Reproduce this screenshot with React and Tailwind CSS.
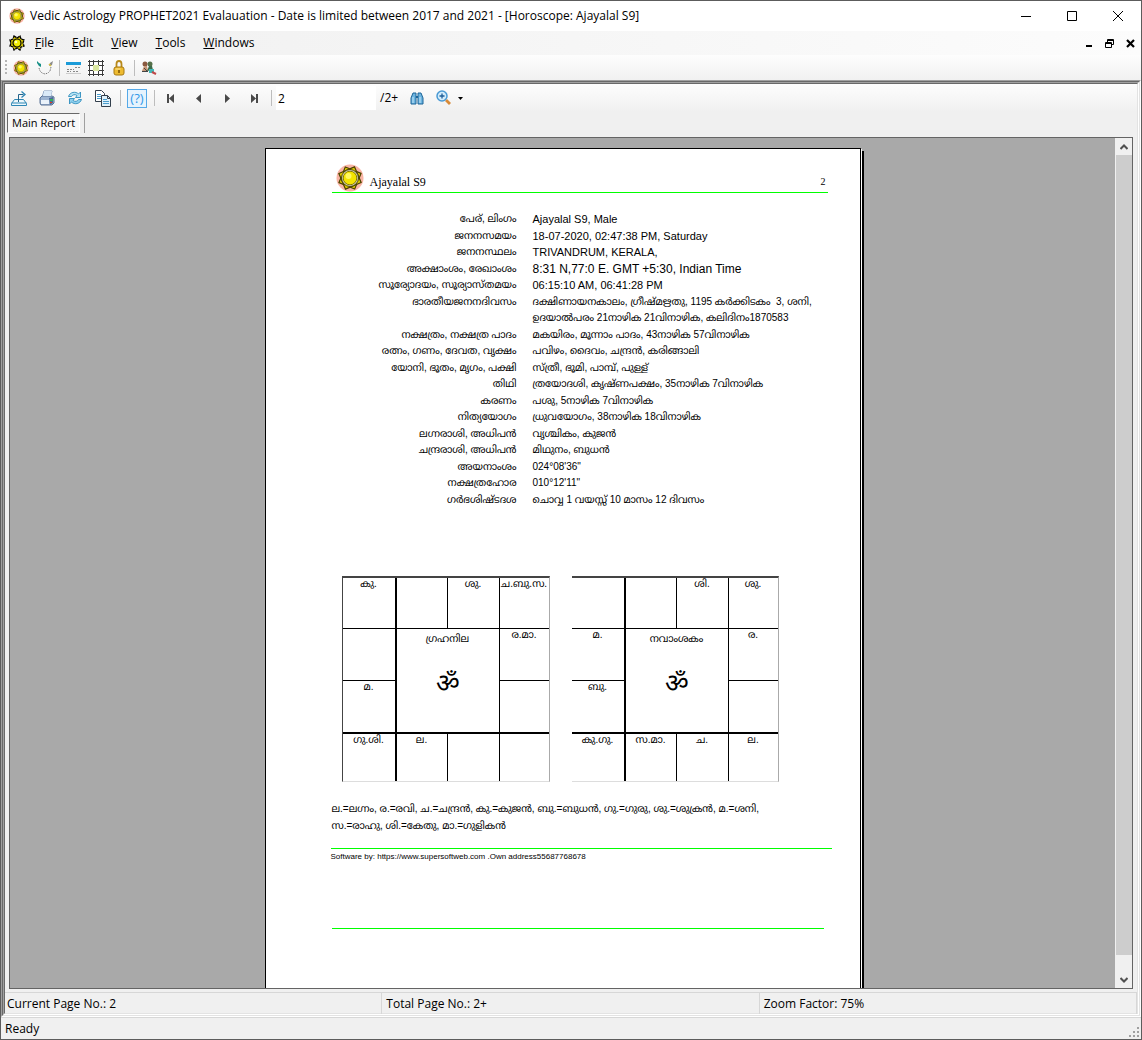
import { useState } from "react";

const menus = ["File", "Edit", "View", "Tools", "Windows"];

const details = [
    { label: "പേര്, ലിംഗം", value: "Ajayalal S9, Male", size: "latin" },
    { label: "ജനനസമയം", value: "18-07-2020, 02:47:38 PM, Saturday", size: "latin" },
    { label: "ജനനസ്ഥലം", value: "TRIVANDRUM, KERALA,", size: "latin" },
    { label: "അക്ഷാംശം, രേഖാംശം", value: "8:31 N,77:0 E. GMT +5:30, Indian Time", size: "large" },
    { label: "സൂര്യോദയം, സൂര്യാസ്തമയം", value: "06:15:10 AM, 06:41:28 PM", size: "latin" },
    { label: "ഭാരതീയജനനദിവസം", value: "ദക്ഷിണായനകാലം, ഗ്രീഷ്മഋതു, 1195 കർക്കിടകം  3, ശനി," },
    { label: "", value: "ഉദയാൽപരം 21നാഴിക 21വിനാഴിക, കലിദിനം1870583" },
    { label: "നക്ഷത്രം, നക്ഷത്ര പാദം", value: "മകയിരം, മൂന്നാം പാദം, 43നാഴിക 57വിനാഴിക" },
    { label: "രത്നം, ഗണം, ദേവത, വൃക്ഷം", value: "പവിഴം, ദൈവം, ചന്ദ്രൻ, കരിങ്ങാലി" },
    { label: "യോനി, ഭൂതം, മൃഗം, പക്ഷി", value: "സ്ത്രീ, ഭൂമി, പാമ്പ്, പുള്ള്" },
    { label: "തിഥി", value: "ത്രയോദശി, കൃഷ്ണപക്ഷം, 35നാഴിക 7വിനാഴിക" },
    { label: "കരണം", value: "പശു, 5നാഴിക 7വിനാഴിക" },
    { label: "നിത്യയോഗം", value: "ധ്രുവയോഗം, 38നാഴിക 18വിനാഴിക" },
    { label: "ലഗ്നരാശി, അധിപൻ", value: "വൃശ്ചികം, കുജൻ" },
    { label: "ചന്ദ്രരാശി, അധിപൻ", value: "മിഥുനം, ബുധൻ" },
    { label: "അയനാംശം", value: "024°08'36\"" },
    { label: "നക്ഷത്രഹോര", value: "010°12'11\"" },
    { label: "ഗർഭശിഷ്ടദശ", value: "ചൊവ്വ 1 വയസ്സ് 10 മാസം 12 ദിവസം" },
];

const valueSize = {
    latin: "text-[11px]",
    large: "text-[12px]",
    small: "text-[10px]",
};

// houses run row by row, null is where the centre square sits
const grahanila = {
    title: "ഗ്രഹനില",
    houses: ["കു.", "", "ശു.", "ച.ബു.സ.", "", null, "ര.മാ.", "മ.", "", "ഗു.ശി.", "ല.", "", ""],
};
const navamsakam = {
    title: "നവാംശകം",
    houses: ["", "", "ശി.", "ശു.", "മ.", null, "ര.", "ബു.", "", "കു.ഗു.", "സ.മാ.", "ച.", "ല."],
};

function Sun({ className }) {
    return (
        <svg viewBox="0 0 28 28" className={className}>
            <circle cx="14" cy="14" r="13.5" fill="#f9b4a4" />
            <g fill="#e8d400" stroke="#4a4200" strokeWidth="1.2">
                <rect x="5.5" y="5.5" width="17" height="17" transform="rotate(22 14 14)" />
                <rect x="5.5" y="5.5" width="17" height="17" transform="rotate(67 14 14)" />
            </g>
            <circle cx="14" cy="14" r="8.5" fill="#d8d8c0" stroke="#4a4200" />
            <circle cx="14" cy="14" r="6.8" fill="#f4e400" stroke="#8a7c00" />
            <circle cx="12.5" cy="12" r="3" fill="#fff860" />
        </svg>
    );
}

function MenuSun() {
    return (
        <svg viewBox="0 0 16 16" className="size-4">
            <path d="M5 1l3 2 3-2 1 3 3 1-1 3 1 3-3 1-1 3-3-2-3 2-1-3-3-1 1-3-1-3 3-1z" fill="#d8c800" stroke="#000" strokeWidth="1.3" strokeDasharray="3 .6" />
            <circle cx="8" cy="8" r="4" fill="#f0ec00" stroke="#000" strokeWidth="1.2" />
            <circle cx="7" cy="7" r="1.3" fill="#ffffb0" />
        </svg>
    );
}

function Separator() {
    return <div className="w-px h-4 bg-[#bdbdbd]" />;
}

function MainToolbar() {
    return (
        <div className="flex items-center h-[25px] shrink-0 pl-1 bg-linear-to-b from-[#fdfdfd] to-[#f1f1f1]">
            <svg viewBox="0 0 2 16" className="w-0.5 h-4">
                <path d="M0 1h2M0 5h2M0 9h2M0 13h2" stroke="#b5b5b5" strokeWidth="2" />
            </svg>
            <button aria-label="Horoscope" className="ml-1.5"><Sun className="size-4" /></button>
            <button aria-label="Matching" className="ml-2">
                <svg viewBox="0 0 16 16" className="size-4">
                    <path d="M0 1l2 2 2 1v3l-2-1-2-3z" fill="#168f86" />
                    <path d="M16 1l-3 2-1 3 3-1z" fill="#8a8a8a" />
                    <path d="M12 4l2 2" stroke="#d8c040" strokeWidth="1.5" />
                    <path d="M2 8l1 3 2 2 3 1 3-1M14 7l-1 4-2 2" fill="none" stroke="#777" strokeDasharray="1.5 1" />
                </svg>
            </button>
            <div className="ml-1.5"><Separator /></div>
            <button aria-label="Report list" className="ml-1.5">
                <svg viewBox="0 0 16 16" className="size-4">
                    <rect y="2" width="15" height="3" fill="#1b9bd8" />
                    <rect y="5" width="15" height="9" fill="#f4f4f4" />
                    <path d="M9 7.500h5M1 9.500h7M1 11.500h4M7 11.500h6" stroke="#888" strokeDasharray="2 1" />
                    <path d="M0 13.500h15" stroke="#ccc" />
                </svg>
            </button>
            <button aria-label="Chart" className="ml-1.5">
                <svg viewBox="0 0 16 16" className="size-4">
                    <rect width="16" height="16" fill="#fff" />
                    <path d="M0 1.500h16M0 5.500h16M0 10.500h16M0 14.500h16M1.500 0v16M5.500 0v16M10.500 0v16M14.500 0v16" stroke="#3c3c3c" />
                    <rect x="5" y="5" width="6" height="6" fill="#dbe8a0" />
                </svg>
            </button>
            <button aria-label="Lock" className="ml-2">
                <svg viewBox="0 0 14 16" className="w-3.5 h-4">
                    <path d="M4.500 8V4a2.500 3 0 0 1 5 0v4" fill="none" stroke="#b88a1c" strokeWidth="1.8" />
                    <rect x="2" y="7" width="10" height="8" rx="2" fill="#eebb30" stroke="#a67810" />
                    <path d="M3.500 9h5" stroke="#ffe9a0" />
                    <path d="M7 10v3" stroke="#7a5200" strokeWidth="1.500" />
                </svg>
            </button>
            <div className="ml-2"><Separator /></div>
            <button aria-label="People" className="ml-1.5">
                <svg viewBox="0 0 16 16" className="size-4">
                    <circle cx="4" cy="4" r="2.500" fill="#8a5a40" />
                    <circle cx="9" cy="4" r="2.500" fill="#55704a" />
                    <path d="M1 11l2-5h3l1 5z" fill="#c89878" />
                    <path d="M6 11l2-5h3l1 4z" fill="#3d6b4a" />
                    <path d="M1 11.500h6M3 8l3 3" stroke="#444" />
                    <rect x="8" y="9" width="5" height="4" fill="#42b8b8" />
                    <path d="M11 12l4 2" stroke="#c04848" strokeWidth="2" />
                </svg>
            </button>
        </div>
    );
}

function ViewerToolbar() {
    const [page, setPage] = useState("2");

    return (
        <div className="flex items-center h-7 shrink-0 pl-1.5 text-[#4a4a4a]">
            <button aria-label="Export">
                <svg viewBox="0 0 16 16" className="size-4">
                    <path d="M3.500 9.500l-3 4v2h15v-2l-3-4zM.5 13h15" fill="#eef8fc" stroke="#2d86b5" />
                    <path d="M7.500 12V4.500h5" fill="none" stroke="#24648a" />
                    <path d="M10.500 1.500l3.500 3-3.500 3" fill="none" stroke="#2d86b5" strokeWidth="1.300" />
                </svg>
            </button>
            <button aria-label="Print" className="ml-3">
                <svg viewBox="0 0 16 16" className="size-4">
                    <path d="M5 1h8l-2 7H3z" fill="#dbeaf8" stroke="#7b95b8" />
                    <path d="M1 8l2-2h10l2 1v6l-2 2H2l-1-2z" fill="#9db4d2" stroke="#5a7396" />
                    <path d="M5 1h8l-1 5H4z" fill="#dbeaf8" />
                    <path d="M2 10h8v4H2z" fill="#eaf2fa" />
                    <path d="M10 8l4-1v6l-3 2z" fill="#4a6a98" />
                    <rect x="11" y="9" width="3" height="2" fill="#38b058" />
                    <rect x="11" y="12" width="2" height="1" fill="#e04020" />
                </svg>
            </button>
            <button aria-label="Refresh" className="ml-3">
                <svg viewBox="0 0 16 16" className="size-4">
                    <path d="M1.500 6.500C3 2 8.500 1 11.500 4L13.500 2v5.500H8.500l1.500-2C8 4 5.500 4.500 4.500 6.500z" fill="#b9e4f5" stroke="#2f8dbd" strokeWidth=".9" />
                    <path d="M14.500 9.500c-1.500 4.500-7 5.500-10 2.500l-2 2V8.500h5l-1.500 2c2 1.500 4.500 1 5.500-1z" fill="#8fd0ee" stroke="#2f8dbd" strokeWidth=".9" />
                </svg>
            </button>
            <button aria-label="Copy" className="ml-3">
                <svg viewBox="0 0 17 17" className="size-[17px]">
                    <path d="M.5.5h6l3 3v8h-9z" fill="#fff" stroke="#333f4c" />
                    <path d="M2 4.500h4M2 6.500h5M2 8.500h5" stroke="#4a9ccc" />
                    <path d="M6.500 5.500h6l3 3v8h-9z" fill="#dff1fb" stroke="#333f4c" />
                    <path d="M12.500 5.500v3h3" fill="none" stroke="#333f4c" />
                    <path d="M8 9.500h4M8 11.500h6M8 13.500h6" stroke="#4a9ccc" />
                </svg>
            </button>
            <div className="ml-2"><Separator /></div>
            <button className="ml-1.5 w-5 h-[19px] border border-[#55a9e8] bg-[#e6f3fd] text-[13px] leading-4 font-medium text-[#3298e8]">(?)</button>
            <div className="ml-[7px]"><Separator /></div>
            <button aria-label="First page" className="ml-3">
                <svg viewBox="0 0 8 9" className="w-2 h-[9px]" fill="currentColor"><path d="M0 0h2v9H0zM7 0v9L2 4.500z" /></svg>
            </button>
            <button aria-label="Previous page" className="ml-5">
                <svg viewBox="0 0 8 9" className="w-2 h-[9px]" fill="currentColor"><path d="M6 0v9L1 4.500z" /></svg>
            </button>
            <button aria-label="Next page" className="ml-5">
                <svg viewBox="0 0 8 9" className="w-2 h-[9px]" fill="currentColor"><path d="M2 0v9l5-4.500z" /></svg>
            </button>
            <button aria-label="Last page" className="ml-5">
                <svg viewBox="0 0 8 9" className="w-2 h-[9px]" fill="currentColor"><path d="M0 0v9l5-4.500zM5 0h2v9H5z" /></svg>
            </button>
            <div className="ml-3"><Separator /></div>
            <input aria-label="Page number" value={page} onChange={(ev) => setPage(ev.target.value)}
                className="ml-1 pl-0.5 w-[100px] h-6 bg-white text-black outline-none" />
            <span className="ml-1 w-7 text-black">/2+</span>
            <button aria-label="Find" className="ml-0.5">
                <svg viewBox="0 0 14 13" className="w-3.5 h-[13px]">
                    <path d="M3 1h3v11H1V6zM11 1H8v11h5V6z" fill="#6cb4e0" stroke="#1d6598" />
                    <path d="M6 5h2" stroke="#1d6598" strokeWidth="2" />
                    <path d="M3 5v6M10 5v6" stroke="#c5e6f8" />
                </svg>
            </button>
            <button aria-label="Zoom" className="flex items-center gap-1.5 ml-3">
                <svg viewBox="0 0 16 16" className="size-4">
                    <path d="M10 10l4 4" stroke="#d88a38" strokeWidth="2.800" />
                    <circle cx="6" cy="6" r="5" fill="#d2ecfb" stroke="#4a9ad4" strokeWidth="1.500" />
                    <path d="M6 3.500v5M3.500 6h5" stroke="#1f5e98" strokeWidth="1.300" />
                </svg>
                <svg viewBox="0 0 5 3" className="w-[5px] h-[3px]"><path d="M0 0h5L2.500 3z" /></svg>
            </button>
        </div>
    );
}

function Chart({ chart, open }) {
    return (
        <div className={`grid grid-cols-[52px_52px_52px_50px] grid-rows-[50px_52px_52px_49px] border-t-2 border-t-[#444] border-r border-r-[#aaa] border-b border-b-[#ddd] text-[10px] leading-3 text-center ${open ? "" : "border-l border-l-[#444]"}`}>
            {chart.houses.map((house, i) => {
                if (house === null) {
                    return (
                        <div key={i} className="col-span-2 row-span-2 flex flex-col items-center pt-1 border-t border-l-2 border-black">
                            <span>{chart.title}</span>
                            <span className="mt-[22px] text-[26px] leading-8">ॐ</span>
                        </div>
                    );
                }
                const top = i < 4 ? "" : i > 8 ? "border-t-2 " : "border-t ";
                const left = i % 4 === 0 && i < 8 || i === 7 || i === 9 ? "" : i === 1 || i === 10 ? "border-l-2 " : "border-l ";
                return <div key={i} className={"whitespace-nowrap border-black " + top + left}>{house}</div>;
            })}
        </div>
    );
}

function ReportPage() {
    return (
        <div className="w-[596px] mx-auto mt-2.5 h-[1100px] bg-white border border-black text-black shadow-[1px_1px_0_#fff,3px_3px_0_#000] font-['Liberation_Sans','Noto_Sans_Malayalam',sans-serif]">
            <div className="flex items-end mx-[66px] mr-8 h-11 pl-1 pr-0.5 border-b border-[#00ff00] font-['Liberation_Serif',serif] text-[12px]">
                <Sun className="size-7" />
                <span className="ml-1.5 mb-0.5 leading-4">Ajayalal S9</span>
                <span className="ml-auto mb-0.5 leading-4 text-[10px]">2</span>
            </div>
            <table className="mt-[18px] ml-[66px]">
                <tbody>
                    {details.map((row, i) => (
                        <tr key={i} className="odd:h-4 even:h-[17px] leading-4 whitespace-pre">
                            <th scope="row" className="w-[185px] p-0 text-right font-normal text-[10px]">{row.label}</th>
                            <td className={"p-0 pl-4 " + valueSize[row.size || "small"]}>{row.value}</td>
                        </tr>
                    ))}
                </tbody>
            </table>
            <div className="flex gap-[22px] mt-[68px] ml-[76px]">
                <Chart chart={grahanila} />
                <Chart chart={navamsakam} open />
            </div>
            <p className="mt-[18px] ml-[66px] text-[10px] leading-[17px] whitespace-pre-line">
                {"ല.=ലഗ്നം, ര.=രവി, ച.=ചന്ദ്രൻ, കു.=കുജൻ, ബു.=ബുധൻ, ഗു.=ഗുരു, ശു.=ശുക്രൻ, മ.=ശനി,\nസ.=രാഹു, ശി.=കേതു, മാ.=ഗുളികൻ"}
            </p>
            <p className="mt-[14px] ml-[65px] mr-7 h-20 pt-0.5 border-t border-[#00ff00] text-[8px] leading-3">
                Software by: https://www.supersoftweb.com .Own address55687768678
            </p>
            <div className="ml-[66px] mr-9 border-t border-[#00ff00]" />
        </div>
    );
}

function ScrollBar() {
    return (
        <div className="flex flex-col w-[17px] shrink-0 pl-px bg-[#f0f0f0] text-[#505050]">
            <button aria-label="Scroll up" className="flex items-center justify-center h-[17px]">
                <svg viewBox="0 0 8 6" className="w-2 h-1.5" fill="none" stroke="currentColor" strokeWidth="2"><path d="M.5 5L4 1.500 7.500 5" /></svg>
            </button>
            <div className="grow bg-[#cdcdcd]" />
            <div className="h-4" />
            <button aria-label="Scroll down" className="flex items-center justify-center h-[17px]">
                <svg viewBox="0 0 8 6" className="w-2 h-1.5" fill="none" stroke="currentColor" strokeWidth="2"><path d="M.5 1L4 4.500 7.500 1" /></svg>
            </button>
        </div>
    );
}

export default function App() {
    return (
        <div className="flex flex-col h-screen border border-[#5c5c5c] bg-[#f0f0f0] text-black text-[12px] font-['Open_Sans',sans-serif]">
            <header className="flex items-center h-[30px] shrink-0 pl-2 pr-[18px] bg-white">
                <Sun className="size-4" />
                <h1 className="ml-[5px]">Vedic Astrology PROPHET2021 Evalauation - Date is limited between 2017 and 2021 - [Horoscope: Ajayalal S9]</h1>
                <div className="flex gap-9 ml-auto">
                    <button aria-label="Minimize"><svg viewBox="0 0 10 10" className="size-2.5" stroke="#000"><path d="M0 5.500h10" /></svg></button>
                    <button aria-label="Maximize"><svg viewBox="0 0 10 10" className="size-2.5" fill="none" stroke="#000"><path d="M.5.5h9v9h-9z" /></svg></button>
                    <button aria-label="Close"><svg viewBox="0 0 10 10" className="size-2.5" stroke="#000"><path d="M0 0l10 10M10 0L0 10" /></svg></button>
                </div>
            </header>
            <nav className="flex items-center h-6 shrink-0 pl-2 pr-1.5 bg-linear-to-r from-[#f0f0f0] to-[#fcfcfc]">
                <MenuSun />
                <div className="flex gap-[18px] ml-2.5">
                    {menus.map((menu) => (
                        <button key={menu}><span className="underline">{menu[0]}</span>{menu.slice(1)}</button>
                    ))}
                </div>
                <div className="flex gap-3 ml-auto">
                    <button aria-label="Minimize window"><svg viewBox="0 0 8 9" className="w-2 h-[9px]"><path d="M1 6h6v2H1z" /></svg></button>
                    <button aria-label="Restore window">
                        <svg viewBox="0 0 9 9" className="size-[9px]" fill="none" stroke="#000"><path d="M2.500 3V.5h6v5H7M2 1.500h6M.5 3.500h6v5h-6zM0 4.500h7" /></svg>
                    </button>
                    <button aria-label="Close window"><svg viewBox="0 0 9 9" className="size-[9px]" stroke="#000" strokeWidth="2.200"><path d="M1 1l7 7M8 1L1 8" /></svg></button>
                </div>
            </nav>
            <MainToolbar />
            <div className="flex flex-col grow min-h-0 border border-t-[#a0a0a0] border-l-[#a0a0a0] border-r-white border-b-white">
                <div className="flex flex-col grow min-h-0 border border-t-[#696969] border-l-[#696969] border-r-[#e3e3e3] border-b-[#e3e3e3]">
                    <div className="flex flex-col grow min-h-0 border border-t-[#a0a0a0] border-l-[#a0a0a0] border-r-white border-b-white">
                        <main className="flex flex-col grow min-h-0 border border-t-[#696969] border-l-[#696969] border-r-[#e3e3e3] border-b-[#e3e3e3]">
                            <div className="bg-linear-to-b from-[#fdfdfd] to-[#f0f0f0]">
                                <ViewerToolbar />
                            </div>
                            <div className="flex items-center h-[25px] shrink-0 pl-0.5 pb-1">
                                <button className="h-5 px-1 border border-t-[#696969] border-l-[#696969] border-r-white border-b-white bg-[#f8f8f8] text-[11px] leading-4">Main Report</button>
                                <div className="ml-1 w-px h-5 bg-[#a0a0a0]" />
                            </div>
                            <div className="flex grow min-h-0 mx-1 border border-[#646464] bg-[#a9a9a9]">
                                <div className="grow overflow-hidden">
                                    <ReportPage />
                                </div>
                                <ScrollBar />
                            </div>
                            <footer className="grid grid-cols-3 h-[21px] shrink-0 mt-[3px] border-t border-[#d7d7d7] leading-[21px]">
                                <div className="pl-0.5 border-r border-[#d7d7d7]">Current Page No.: 2</div>
                                <div className="pl-1 border-r border-[#d7d7d7]">Total Page No.: 2+</div>
                                <div className="pl-1 border-r border-[#d7d7d7]">Zoom Factor: 75%</div>
                            </footer>
                        </main>
                    </div>
                </div>
            </div>
            <footer className="flex items-center justify-between h-[22px] shrink-0 pl-1 border-t border-[#d7d7d7]">
                <span>Ready</span>
                <svg viewBox="0 0 12 12" className="self-end size-3" fill="#a0a0a0">
                    <path d="M8 0h2v2H8zM8 4h2v2H8zM8 8h2v2H8zM4 4h2v2H4zM4 8h2v2H4zM0 8h2v2H0z" />
                </svg>
            </footer>
        </div>
    );
}
